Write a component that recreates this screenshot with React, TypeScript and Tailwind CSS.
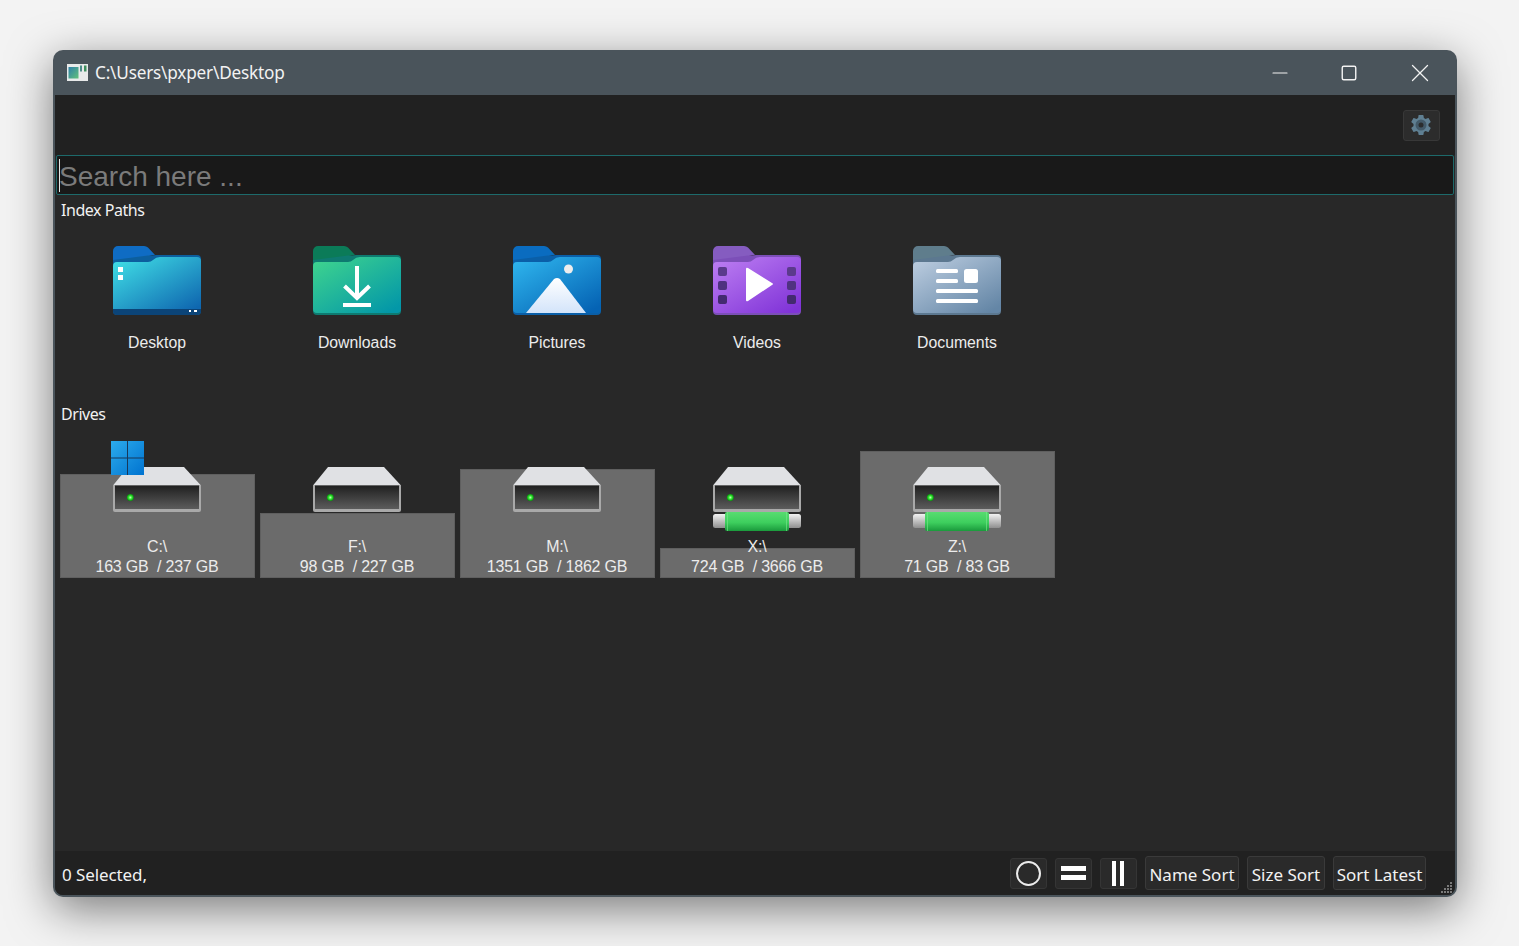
import { Minus, Square, X } from "lucide-react";

const SEGOE = "font-['Noto_Sans','Open_Sans',sans-serif]";
const ARIAL = "font-['Liberation_Sans',Arial,sans-serif]";

const FolderShell = ({
  id,
  tab,
  lip,
  from,
  to,
  children,
}: {
  id: string;
  tab: string;
  lip: string;
  from: string;
  to: string;
  children?: React.ReactNode;
}) => (
  <svg width="88" height="70" viewBox="0 0 88 70">
    <defs>
      <linearGradient id={id} x1="0" y1="0.05" x2="0.85" y2="1">
        <stop offset="0" stopColor={from} />
        <stop offset="1" stopColor={to} />
      </linearGradient>
    </defs>
    <path d="M0 6a5 5 0 0 1 5-5h26a6 6 0 0 1 4 1.500l7 7.500H40L0 20z" fill={tab} />
    <path d="M35 10.500l4 0 4-0.500h41a4 4 0 0 1 4 4v52a4 4 0 0 1-4 4H4a4 4 0 0 1-4-4V15z" fill={lip} />
    <path d="M4 17h31q3 0 5-2 3-3 7-3h37a4 4 0 0 1 4 4v48a4 4 0 0 1-4 4H4a4 4 0 0 1-4-4V21a4 4 0 0 1 4-4z" fill={`url(#${id})`} />
    {children}
  </svg>
);

const DesktopFolder = () => (
  <FolderShell id="fDesktop" tab="#0f6cc4" lip="#0c5f9e" from="#40dfe6" to="#0f67b0">
    <rect x="5" y="22" width="5" height="5" fill="#fff" />
    <rect x="5" y="30" width="5" height="5" fill="#fff" />
    <path d="M0 64h88v2a4 4 0 0 1-4 4H4a4 4 0 0 1-4-4z" fill="#0b4478" />
    <rect x="76" y="65" width="2" height="2" fill="#fff" />
    <rect x="81" y="65" width="3" height="2" fill="#fff" />
  </FolderShell>
);

const DownloadsFolder = () => (
  <FolderShell id="fDownloads" tab="#0b7b58" lip="#0e7a70" from="#3fd48e" to="#0397a8">
    <path d="M44 21v33" stroke="#fff" strokeWidth="4" />
    <path d="M31.500 41L44 53l12.500-12" stroke="#fff" strokeWidth="4" fill="none" />
    <rect x="30" y="58" width="28" height="4" fill="#fff" />
  </FolderShell>
);

const PicturesFolder = () => (
  <FolderShell id="fPictures" tab="#0a6cc0" lip="#0a5fa8" from="#2fb6ee" to="#0563b4">
    <circle cx="55.500" cy="24" r="4.500" fill="#ededed" />
    <defs>
      <linearGradient id="fMount" x1="0" y1="0" x2="0" y2="1">
        <stop offset="0" stopColor="#ffffff" />
        <stop offset="1" stopColor="#d3e4fa" />
      </linearGradient>
    </defs>
    <path d="M13 68L41 34q3-2 6 0l26 34z" fill="url(#fMount)" />
  </FolderShell>
);

const VideosFolder = () => (
  <FolderShell id="fVideos" tab="#855cc0" lip="#7c4fb8" from="#bc7ef2" to="#8134d8">
    {[22, 36, 50].map((y) => (
      <g key={y}>
        <rect x="5" y={y} width="9" height="9" rx="2" fill={y === 22 ? "#5b3a8c" : y === 36 ? "#4f3280" : "#432a70"} />
        <rect x="74" y={y} width="9" height="9" rx="2" fill={y === 22 ? "#5b3a8c" : y === 36 ? "#4f3280" : "#432a70"} />
      </g>
    ))}
    <path d="M33 24q0-2 2-1l24 15q2 1 0 2L35 56q-2 1-2-1z" fill="#fff" />
  </FolderShell>
);

const DocumentsFolder = () => (
  <FolderShell id="fDocuments" tab="#5f7d8c" lip="#5c7890" from="#bccde0" to="#6486a6">
    <rect x="23" y="24" width="22" height="4" rx="1.500" fill="#fff" />
    <rect x="23" y="34" width="22" height="4" rx="1.500" fill="#fff" />
    <rect x="51" y="24" width="14" height="14" rx="2.500" fill="#fff" />
    <rect x="23" y="44" width="42" height="4" rx="1.500" fill="#fff" />
    <rect x="23" y="54" width="42" height="4" rx="1.500" fill="#fff" />
  </FolderShell>
);

const DriveIcon = ({ id, usb }: { id: string; usb?: boolean }) => (
  <svg width="88" height="64" viewBox="0 0 88 64" className="block">
    <defs>
      <linearGradient id={`${id}b`} x1="0" y1="0" x2="0" y2="1">
        <stop offset="0" stopColor="#1f1f1f" />
        <stop offset="1" stopColor="#5c5c5c" />
      </linearGradient>
      <radialGradient id={`${id}l`}>
        <stop offset="0" stopColor="#c8ffb8" />
        <stop offset="0.5" stopColor="#2fe82f" />
        <stop offset="1" stopColor="#0c8a10" />
      </radialGradient>
      <linearGradient id={`${id}g`} x1="0" y1="0" x2="0" y2="1">
        <stop offset="0" stopColor="#58dc70" />
        <stop offset="0.55" stopColor="#3ecf5e" />
        <stop offset="1" stopColor="#1a9a3c" />
      </linearGradient>
      <linearGradient id={`${id}w`} x1="0" y1="0" x2="0" y2="1">
        <stop offset="0" stopColor="#f2f2f2" />
        <stop offset="1" stopColor="#8f8f8f" />
      </linearGradient>
    </defs>
    <path d="M15 0h56l17 18.500H0z" fill="#e0e1e4" />
    <path d="M0 18h88v25a2 2 0 0 1-2 2H2a2 2 0 0 1-2-2z" fill="#a9a9a9" />
    <rect x="2" y="18.500" width="84" height="23.500" fill={`url(#${id}b)`} />
    <circle cx="17.300" cy="30.500" r="3.500" fill={`url(#${id}l)`} />
    {usb && (
      <>
        <rect x="0" y="47" width="88" height="14" rx="2.500" fill={`url(#${id}w)`} />
        <rect x="12" y="45" width="64" height="19" rx="2" fill={`url(#${id}g)`} />
        <rect x="14" y="45" width="1" height="19" fill="#7ce88e" opacity="0.6" />
        <rect x="73" y="45" width="1" height="19" fill="#7ce88e" opacity="0.6" />
      </>
    )}
  </svg>
);

const WindowsLogo = () => (
  <svg width="33" height="34" viewBox="0 0 33 34" className="absolute left-[51px] top-0 z-10">
    <defs>
      <linearGradient id="winLogo" x1="0" y1="0" x2="1" y2="1">
        <stop offset="0" stopColor="#2cabec" />
        <stop offset="1" stopColor="#0073d0" />
      </linearGradient>
    </defs>
    <path d="M0 0h33v34H0z" fill="url(#winLogo)" />
    <path d="M16 0h1v34h-1zM0 16.500h33v1H0z" fill="#17385a" />
  </svg>
);

const folders = [
  { name: "Desktop", icon: <DesktopFolder /> },
  { name: "Downloads", icon: <DownloadsFolder /> },
  { name: "Pictures", icon: <PicturesFolder /> },
  { name: "Videos", icon: <VideosFolder /> },
  { name: "Documents", icon: <DocumentsFolder /> },
];

const drives = [
  { name: "C:\\", used: "163 GB", total: "237 GB", bar: 104, usb: false, win: true },
  { name: "F:\\", used: "98 GB", total: "227 GB", bar: 65, usb: false, win: false },
  { name: "M:\\", used: "1351 GB", total: "1862 GB", bar: 109, usb: false, win: false },
  { name: "X:\\", used: "724 GB", total: "3666 GB", bar: 30, usb: true, win: false },
  { name: "Z:\\", used: "71 GB", total: "83 GB", bar: 127, usb: true, win: false },
];

const IconButton = ({ children }: { children: React.ReactNode }) => (
  <button className="flex h-[31px] w-[37px] items-center justify-center rounded-[3px] border border-[#353535] bg-[#2a2a2a]">
    {children}
  </button>
);

const TextButton = ({ label, width }: { label: string; width: string }) => (
  <button className={`h-[34px] ${width} rounded-[3px] border border-[#3a3a3a] bg-[#2a2a2a] pt-[4px] text-[17px] leading-[22px] text-[#f2f2f2] ${SEGOE}`}>
    {label}
  </button>
);

export default function App() {
  return (
    <div className="h-[946px] w-[1519px] overflow-hidden bg-[#f3f3f3] pl-[53px] pt-[50px]">
      <div className="flex h-[847px] w-[1404px] flex-col overflow-hidden rounded-[10px] bg-[#4a545b] shadow-[0_12px_45px_rgba(0,0,0,0.5)]">
        {/* title bar */}
        <div className="flex h-[45px] shrink-0 items-center text-[#f2f2f2]">
          <svg width="22" height="18" viewBox="0 0 22 18" className="ml-[14px]">
            <defs>
              <linearGradient id="appIcon" x1="0" y1="0" x2="1" y2="1">
                <stop offset="0" stopColor="#2f7fa8" />
                <stop offset="1" stopColor="#62c27a" />
              </linearGradient>
            </defs>
            <rect width="21" height="17" fill="#e8eaea" />
            <rect x="1.500" y="3" width="10" height="11.500" fill="url(#appIcon)" />
            <rect x="13" y="1.500" width="2" height="6" fill="#4f8d8a" />
            <rect x="17" y="1.500" width="2.500" height="6" fill="#3f8f5f" />
          </svg>
          <span className={`ml-[6px] text-[17.200px] tracking-[-0.2px] ${SEGOE}`}>C:\Users\pxper\Desktop</span>
          <div className="ml-auto flex items-center">
            <Minus size={24} strokeWidth={1.1} className="mr-[48px]" />
            <Square size={18} strokeWidth={1.9} className="mr-[47px]" />
            <X size={30} strokeWidth={1} className="mr-[22px]" />
          </div>
        </div>

        {/* body */}
        <div className="mx-[2px] mb-[2px] flex min-h-0 flex-1 flex-col rounded-b-[8px] bg-[#282828]">
          <div className="flex h-[60px] shrink-0 items-center justify-end bg-[#212121] pr-[15px]">
            <button className="flex h-[31px] w-[37px] items-center justify-center rounded-[3px] border border-[#383838] bg-[#2c2c2c]">
              <svg width="24" height="24" viewBox="0 0 24 24" className="-ml-[1px]">
                <path
                  d="M19.430 12.980c.04-.32.07-.64.07-.98s-.03-.66-.07-.98l2.110-1.650c.19-.15.24-.42.12-.64l-2-3.460c-.12-.22-.39-.3-.61-.22l-2.490 1c-.52-.4-1.080-.73-1.690-.98l-.38-2.650A.49.49 0 0 0 14 2h-4c-.25 0-.46.18-.49.420l-.38 2.650c-.61.25-1.170.59-1.690.98l-2.490-1c-.23-.09-.49 0-.61.220l-2 3.460c-.13.220-.07.490.12.640l2.110 1.650c-.04.320-.07.650-.07.980s.03.660.07.980l-2.110 1.650c-.19.150-.24.420-.12.640l2 3.460c.12.220.39.300.61.220l2.490-1c.52.400 1.080.730 1.690.980l.38 2.650c.03.240.24.420.49.420h4c.25 0 .46-.18.49-.42l.38-2.650c.61-.25 1.170-.59 1.690-.98l2.490 1c.23.090.49 0 .61-.22l2-3.460c.12-.22.07-.49-.12-.64l-2.110-1.650z"
                  fill="#5f7f92"
                />
                <circle cx="12" cy="12" r="5.500" fill="#435a69" />
                <circle cx="12" cy="12" r="2.500" fill="#2b2d2e" />
              </svg>
            </button>
          </div>

          <div className="relative mx-[1px] flex h-[40px] shrink-0 items-center rounded-[2px] border border-[#1d6a6b] bg-[#191919] pl-[2px]">
            <span className="h-[33px] w-px bg-[#e6e6e6]" />
            <span className={`-ml-[1px] pt-[3px] text-[28px] leading-none text-[#7b7b7b] ${ARIAL}`}>Search here ...</span>
          </div>

          <div className="flex flex-1 flex-col pl-[5px]">
            <div className={`mt-[4px] pl-[1px] text-[16px] leading-[22px] tracking-[-0.45px] text-[#f2f2f2] ${SEGOE}`}>Index Paths</div>
            <div className="mt-[24px] flex">
              {folders.map((f) => (
                <div key={f.name} className="flex w-[200px] flex-col items-center pr-[6px]">
                  {f.icon}
                  <span className={`mt-[18px] text-[15.800px] leading-[20px] text-[#ececec] ${ARIAL}`}>{f.name}</span>
                </div>
              ))}
            </div>
            <div className={`mt-[50px] text-[16px] leading-[22px] tracking-[-0.45px] text-[#f2f2f2] ${SEGOE}`}>
              <span className="pl-[1px]">Drives</span>
            </div>
            <div className="mt-[16px] flex gap-[5px]">
              {drives.map((d) => (
                <div key={d.name} className="relative flex h-[137px] w-[195px] flex-col items-center pt-[26px]">
                  <div
                    className="absolute inset-x-0 bottom-0 border border-[#5f5f5f] bg-[#6b6b6b]"
                    style={{ height: d.bar }}
                  />
                  {d.win && <WindowsLogo />}
                  <div className="relative -ml-[2px]">
                    <DriveIcon id={`d${d.name[0]}`} usb={d.usb} />
                  </div>
                  <div className={`absolute inset-x-0 top-[96px] pr-[1px] text-center text-[16px] leading-[20px] tracking-[-0.2px] text-[#ececec] ${ARIAL}`}>
                    <div>{d.name}</div>
                    <div className="whitespace-pre">{`${d.used}  / ${d.total}`}</div>
                  </div>
                </div>
              ))}
            </div>
          </div>

          {/* status bar */}
          <div className="relative flex h-[44px] shrink-0 items-center rounded-b-[8px] bg-[#212121] pl-[7px] pr-[29px]">
            <span className={`pt-[3px] text-[17px] tracking-[-0.1px] text-[#f2f2f2] ${SEGOE}`}>0 Selected,</span>
            <div className="ml-auto flex items-center gap-[8px]">
              <IconButton>
                <span className="h-[25px] w-[25px] rounded-full border-2 border-[#ececec]" />
              </IconButton>
              <IconButton>
                <span className="flex flex-col gap-[4px]">
                  <span className="h-[5px] w-[25px] bg-white" />
                  <span className="h-[5px] w-[25px] bg-white" />
                </span>
              </IconButton>
              <IconButton>
                <span className="-ml-[1px] flex h-[25px] gap-[4px]">
                  <span className="h-[25px] w-[4px] bg-white" />
                  <span className="h-[25px] w-[4px] bg-white" />
                </span>
              </IconButton>
              <TextButton label="Name Sort" width="w-[94px]" />
              <TextButton label="Size Sort" width="w-[78px]" />
              <TextButton label="Sort Latest" width="w-[93px]" />
            </div>
            <svg width="14" height="14" viewBox="0 0 14 14" className="absolute bottom-[1px] right-[1px]">
              {[[10, 2], [7, 5], [10, 5], [4, 8], [7, 8], [10, 8], [1, 11], [4, 11], [7, 11], [10, 11]].map(([x, y]) => (
                <rect key={`${x}-${y}`} x={x} y={y} width="2" height="2" fill="#7a7a7a" />
              ))}
            </svg>
          </div>
        </div>
      </div>
    </div>
  );
}
